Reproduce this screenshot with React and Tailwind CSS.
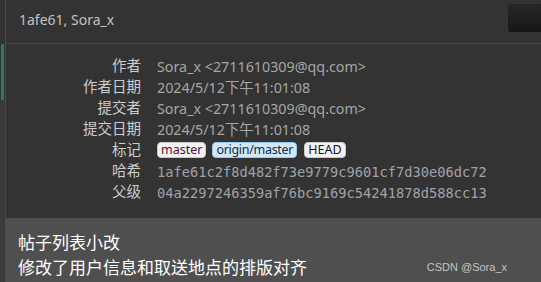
export default function App() {
  const sans = { fontFamily: '"Noto Sans", "Noto Sans CJK SC", sans-serif' };
  const rows = [
    ["作者", "Sora_x <2711610309@qq.com>", "text"],
    ["作者日期", "2024/5/12下午11:01:08", "text"],
    ["提交者", "Sora_x <2711610309@qq.com>", "text"],
    ["提交日期", "2024/5/12下午11:01:08", "text"],
    ["标记", null, "tags"],
    ["哈希", "1afe61c2f8d482f73e9779c9601cf7d30e06dc72", "mono"],
    ["父级", "04a2297246359af76bc9169c54241878d588cc13", "mono"],
  ];
  return (
    <div className="relative w-[541px] h-[282px] bg-[#333333] flex overflow-hidden" style={sans}>
      <div className="w-[6px] flex flex-col border-r border-[#4a4a4a]">
        <div className="h-[44px] bg-[#333333]" />
        <div className="h-[56px] bg-[#2f7a5c] mr-[1px] ml-[1px]" />
        <div className="flex-1 bg-[#3b3b3b]" />
      </div>
      <div className="flex-1 flex flex-col min-w-0">
        <div className="h-[44px] border-b border-[#464646] flex justify-between items-start shrink-0">
          <div className="pl-[13px] pt-[10px] text-[14px] leading-[20px] text-[#c2c2c2]">1afe61, Sora_x</div>
          <div className="mt-[3px] w-[34px] h-[30px] rounded-l-[4px] bg-gradient-to-b from-[#262626] to-[#171717] border border-[#353535] border-r-0" />
        </div>
        <div className="grid grid-cols-[135px_1fr] gap-x-[16px] pt-[11px] auto-rows-[21px] items-center">
          {rows.map(([label, value, kind]) => (
            <>
              <div key={label + "l"} className="text-right text-[14.5px] leading-[21px] text-[#cdcdcd]">{label}</div>
              <div key={label + "v"} className="whitespace-nowrap">
                {kind === "text" && (
                  <span className="text-[14.3px] leading-[21px] text-[#a6a6a6]">{value}</span>
                )}
                {kind === "mono" && (
                  <span className="text-[13.7px] leading-[21px] text-[#a0a3a6]" style={{ fontFamily: '"DejaVu Sans Mono", monospace' }}>{value}</span>
                )}
                {kind === "tags" && (
                  <div className="flex gap-[6px] items-center">
                    <span className="h-[16px] px-[3px] rounded-[4px] bg-[#f3f3f3] border border-[#c9c9c9] text-[#5a0a35] text-[12.5px] leading-[14px] flex items-center">master</span>
                    <span className="h-[16px] px-[3px] rounded-[4px] bg-[#cfe8fb] border border-[#9ccaec] text-[#1a2a44] text-[12.5px] leading-[14px] flex items-center tracking-[-0.3px]">origin/master</span>
                    <span className="h-[16px] px-[3px] ml-[1px] rounded-[4px] bg-[#f3f3f3] border border-[#c9c9c9] text-[#10103a] text-[12.5px] leading-[14px] flex items-center">HEAD</span>
                  </div>
                )}
              </div>
            </>
          ))}
        </div>
        <div className="mt-auto h-[64px] bg-[#4f4f4f] pl-[12px] pt-[12px] text-white text-[17px] leading-[25px]">
          <div>帖子列表小改</div>
          <div>修改了用户信息和取送地点的排版对齐</div>
        </div>
      </div>
      <div className="absolute right-[34px] bottom-[7px] text-[11px] text-[#c4c4c4]" style={{ fontFamily: '"Liberation Sans", sans-serif' }}>CSDN @Sora_x</div>
    </div>
  );
}
